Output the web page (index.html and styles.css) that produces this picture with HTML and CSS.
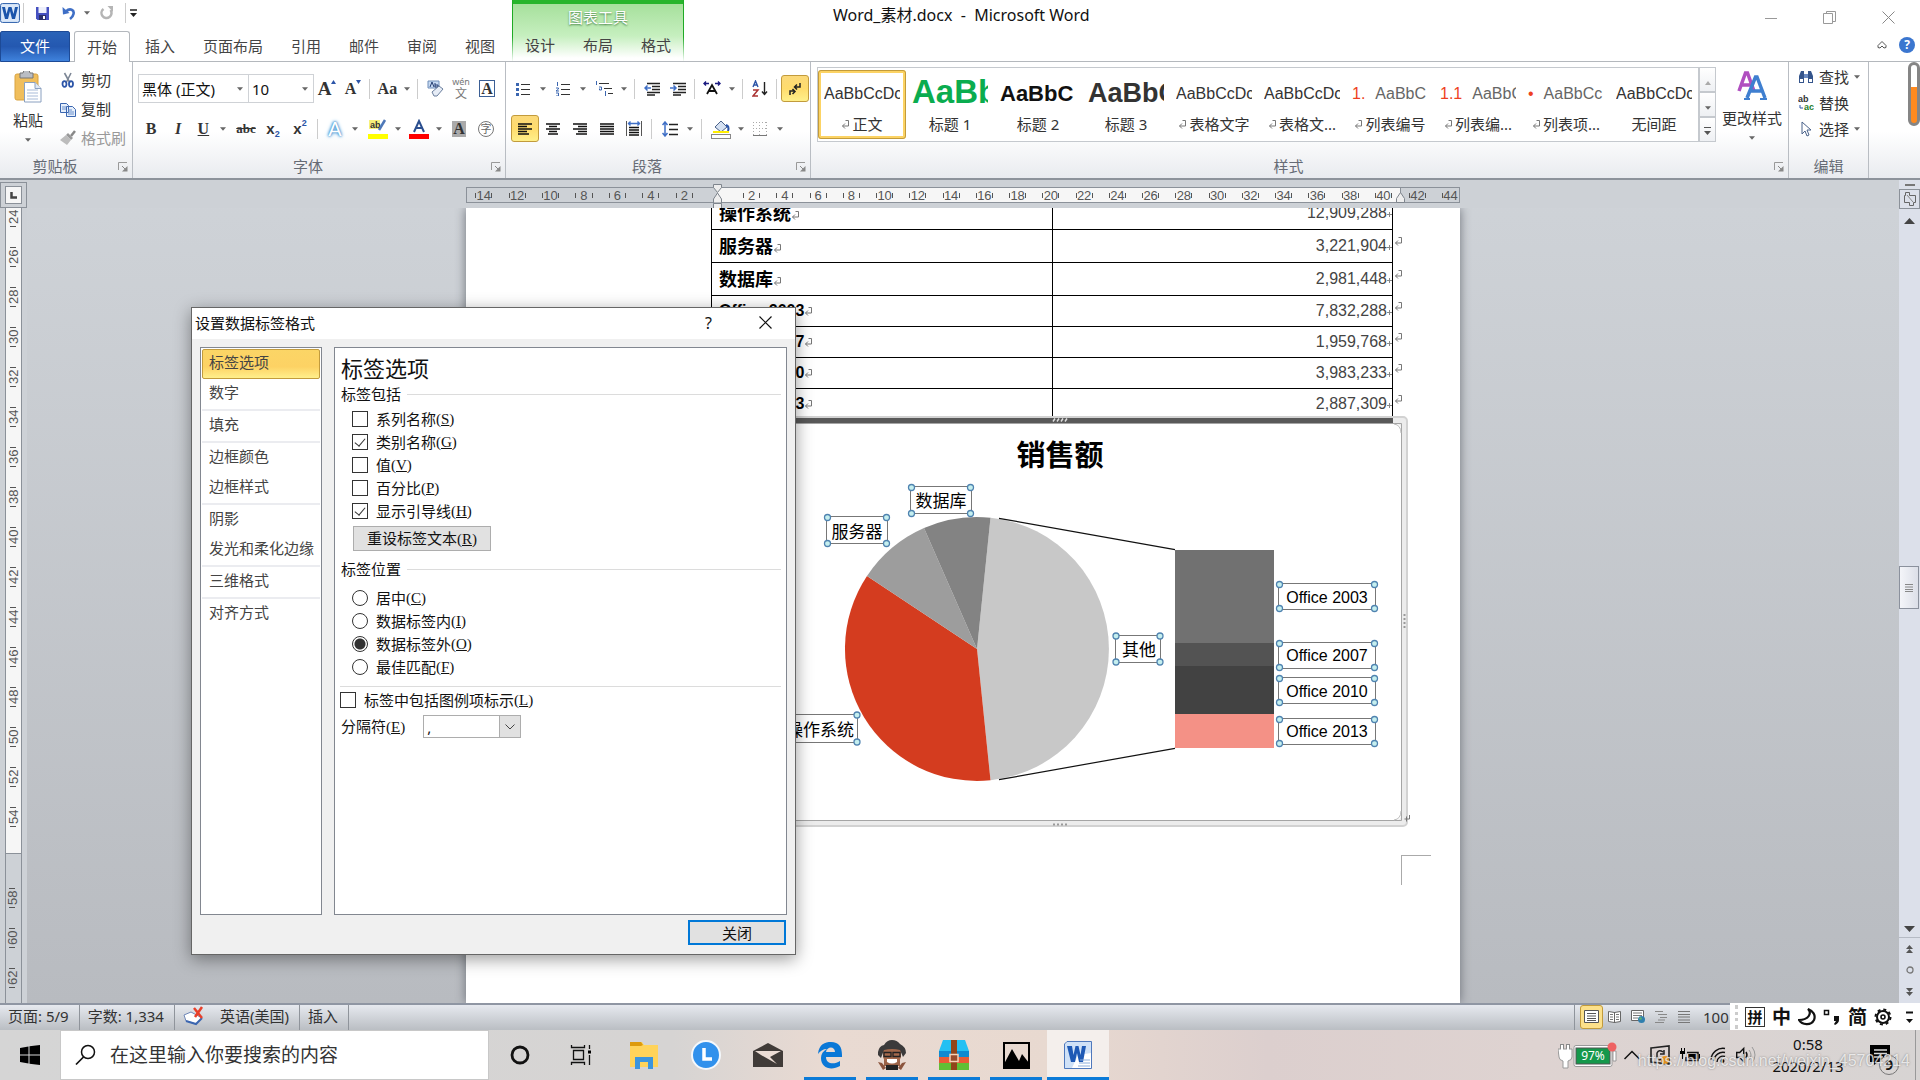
FILE: index.html
```html
<!DOCTYPE html>
<html lang="zh-CN">

<head>
  <meta charset="UTF-8">
  <title>Word_素材.docx - Microsoft Word</title>
  <link rel="stylesheet" href="styles.css">
</head>

<body>
  <svg width="0" height="0" class="defs">
    <symbol id="down" viewBox="0 0 7 4"><path d="M0 0h7L3.5 4z" fill="#666"/></symbol>
    <symbol id="launch" viewBox="0 0 10 10"><path d="M.5 8V.5H9" fill="none" stroke="#999"/><path d="M4 4l4 4" stroke="#888"/><path d="M9.500 4v5.500H4z" fill="#888"/></symbol>
    <symbol id="ret" viewBox="0 0 8 9"><path d="M4.500.5h3v5.500H1.500M4 3.500L1.500 6 4 8.500" fill="none" stroke="#777"/></symbol>
    <symbol id="cellmark" viewBox="0 0 5 7"><path d="M0 3.500h5M2.500 1v5" stroke="#888" fill="none"/></symbol>
  </svg>

  <header class="header">
    <div class="header-left">
      <div class="quick">
        <svg width="20" height="20" viewBox="0 0 20 20"><rect x=".5" y=".5" width="19" height="19" rx="2" fill="#cfe0f5" stroke="#3a6ab0"/><rect x="2" y="2" width="16" height="16" fill="#dbe8f8"/><path d="M2 4l3 12h3l2-8 2 8h3l3-12h-3l-1.500 7L11.500 4h-3L6.500 11 5 4z" fill="#1b55ab"/></svg>
        <span class="sep"></span>
        <svg class="quick-save" width="15" height="15" viewBox="0 0 15 15"><path d="M1 1h13v13H2.500L1 12.500z" fill="#4550c0"/><rect x="3.500" y="1" width="8" height="6" fill="#eef0fb"/><rect x="4" y="9" width="7" height="5" fill="#2a2f6a"/><rect x="8" y="10" width="2" height="3" fill="#fff"/></svg>
        <svg class="quick-undo" width="14" height="14" viewBox="0 0 14 14"><path d="M4 5.500C8 1.500 12.500 4 11.500 8c-.4 2-1.500 3.500-3.500 5" fill="none" stroke="#3f6fc6" stroke-width="2.600"/><path d="M.5 1l.5 7.500L7.500 7z" fill="#3f6fc6"/></svg>
        <svg width="6" height="4"><use href="#down"/></svg>
        <svg class="quick-redo" width="14" height="14" viewBox="0 0 14 14"><path d="M3.500 3a5 5 0 1 0 7 1" fill="none" stroke="#b5b5b5" stroke-width="2.500"/><path d="M7.500 0H13v6z" fill="#b5b5b5"/></svg>
        <span class="sep"></span>
        <svg width="7" height="8" viewBox="0 0 7 8"><path d="M0 1h7" stroke="#222" stroke-width="1.500"/><path d="M0 4h7L3.500 8z" fill="#222"/></svg>
      </div>
      <nav class="tabs">
        <button class="tab tab-file">文件</button>
        <button class="tab tab-active">开始</button>
        <button class="tab">插入</button>
        <button class="tab">页面布局</button>
        <button class="tab">引用</button>
        <button class="tab">邮件</button>
        <button class="tab">审阅</button>
        <button class="tab">视图</button>
      </nav>
    </div>
    <div class="context">
      <div class="context-title">图表工具</div>
      <nav class="tabs">
        <button class="tab">设计</button>
        <button class="tab">布局</button>
        <button class="tab">格式</button>
      </nav>
    </div>
    <div class="header-right">
      <div class="titlebar">
        <h1 class="title">Word_素材.docx&nbsp; -&nbsp; Microsoft Word</h1>
        <div class="window-buttons">
          <button aria-label="最小化"><svg width="12" height="12"><path d="M0 6.500h12" stroke="#999"/></svg></button>
          <button aria-label="还原"><svg width="13" height="13"><path d="M.5 2.500h9v10h-9zM3.500 2.500v-2h9v10h-3" fill="none" stroke="#999"/></svg></button>
          <button aria-label="关闭窗口"><svg width="13" height="13"><path d="M.5.5l12 12M12.500.5l-12 12" stroke="#888"/></svg></button>
        </div>
      </div>
      <div class="help">
        <svg width="10" height="8"><path d="M1 4.500l4-4 4 4v2L7 7 5 5 3 7 1 6.500z" fill="none" stroke="#555"/></svg>
        <button class="help-button">?</button>
      </div>
    </div>
  </header>

  <section class="ribbon">
    <div class="group group-clipboard">
      <div class="group-body">
        <button class="big">
          <svg width="28" height="32" viewBox="0 0 28 32"><rect x="1" y="3" width="23" height="26" rx="2" fill="#f0be5c" stroke="#d9a341"/><path d="M6 2h3a3.500 3.500 0 0 1 7 0h3v5H6z" fill="#b9bdc4" stroke="#777"/><path d="M10.500 11.500H21l6 6V31H10.500z" fill="#fff" stroke="#8aa0c0"/><path d="M21 11.500v6h6" fill="#dfe8f5" stroke="#8aa0c0"/><path d="M13 19h11M13 22h11M13 25h11M13 28h11" stroke="#a8bbd8"/></svg>
          <span>粘贴</span>
          <svg width="6" height="4"><use href="#down"/></svg>
        </button>
        <div class="stack stack-clip">
          <button class="item"><svg width="16" height="16" viewBox="0 0 16 16"><path d="M4.500 1L10 11M11 1L6 11" stroke="#7d8796" stroke-width="1.600"/><ellipse cx="4.500" cy="12" rx="2" ry="2.800" fill="none" stroke="#2c55a8" stroke-width="1.800"/><ellipse cx="11" cy="12" rx="2" ry="2.800" fill="none" stroke="#2c55a8" stroke-width="1.800"/></svg>剪切</button>
          <button class="item"><svg width="16" height="16" viewBox="0 0 16 16"><path d="M.5 2.500h6l2 2v7h-8zM6.500 5.500h6l3 3v7h-9z" fill="#e6effb" stroke="#3b66b0"/><path d="M2 6h4M2 8h4M8 9h4M8 11h6M8 13h6" stroke="#6b90cc"/></svg>复制</button>
          <button class="item item-off"><svg width="16" height="16" viewBox="0 0 16 16"><path d="M15 1l-4 5" stroke="#888" stroke-width="2.500"/><path d="M8 3l5 5-2 2-5-5z" fill="#999"/><path d="M6 5l5 5-4 5-7-5z" fill="#bcbcbc"/></svg>格式刷</button>
        </div>
      </div>
      <div class="group-name">剪贴板<svg class="launch" width="10" height="10"><use href="#launch"/></svg></div>
    </div>

    <div class="group group-font">
      <div class="group-body group-rows">
        <div class="tool-row">
          <div class="combo combo-font"><input aria-label="字体" value="黑体 (正文)"><svg width="6" height="4"><use href="#down"/></svg></div>
          <div class="combo combo-size"><input aria-label="字号" value="10"><svg width="6" height="4"><use href="#down"/></svg></div>
          <button class="tool serif">A<svg class="sup" width="5" height="4"><path d="M0 4l2.500-4L5 4z" fill="#2c55a8"/></svg></button>
          <button class="tool serif serif-small">A<svg class="sup" width="5" height="4"><path d="M0 0h5L2.500 4z" fill="#2c55a8"/></svg></button>
          <span class="sep"></span>
          <button class="tool tool-wide serif serif-small">Aa<svg width="6" height="4"><use href="#down"/></svg></button>
          <span class="sep"></span>
          <button class="tool"><svg width="17" height="17" viewBox="0 0 17 17"><path d="M1 1h11v7H1z" fill="#c7daf3" stroke="#6f8db8"/><path d="M3 7l2-5 2 5M8 7V3M8 5h3v2H8" fill="none" stroke="#223b70"/><path d="M5 12l7-6 4 3-6 7H7z" fill="#e6ecf6" stroke="#6b7f9d"/></svg></button>
          <button class="tool wen"><span>wén</span><span>文</span></button>
          <button class="tool serif"><span class="boxed">A</span></button>
        </div>
        <div class="tool-row tool-row-gap">
          <button class="tool serif serif-small">B</button>
          <button class="tool serif serif-small italic">I</button>
          <button class="tool tool-wide serif serif-small"><u>U</u><svg width="6" height="4"><use href="#down"/></svg></button>
          <button class="tool serif strike">abc</button>
          <button class="tool sans-icon">x<sub>2</sub></button>
          <button class="tool sans-icon">x<sup>2</sup></button>
          <span class="sep"></span>
          <button class="tool tool-wide glow">A<svg width="6" height="4"><use href="#down"/></svg></button>
          <button class="tool tool-wide"><svg width="20" height="20" viewBox="0 0 20 20"><rect x="1" y="1" width="11" height="9" fill="#f7f17a"/><text x="2" y="9" class="mini-text">ab</text><path d="M17 1l-6 10" stroke="#4f78b8" stroke-width="2.500"/><rect y="15" width="20" height="5" fill="#ff0"/></svg><svg width="6" height="4"><use href="#down"/></svg></button>
          <button class="tool tool-wide"><svg width="20" height="20" viewBox="0 0 20 20"><path d="M5 13L10 2l5 11M7 9h6" fill="none" stroke="#2b4f8f" stroke-width="2"/><rect y="15" width="20" height="5" fill="#f00"/></svg><svg width="6" height="4"><use href="#down"/></svg></button>
          <button class="tool serif"><span class="shaded">A</span></button>
          <button class="tool"><span class="ringed">字</span></button>
        </div>
      </div>
      <div class="group-name">字体<svg class="launch" width="10" height="10"><use href="#launch"/></svg></div>
    </div>

    <div class="group group-para">
      <div class="group-body group-rows">
        <div class="tool-row">
          <button class="tool tool-wide"><svg width="14" height="14" viewBox="0 0 14 14"><path d="M5 2.500h9M5 7.500h9M5 12.500h9" stroke="#333"/><path d="M0 2.500h3M0 7.500h3M0 12.500h3" stroke="#3b66b0" stroke-width="3"/></svg><svg width="6" height="4"><use href="#down"/></svg></button>
          <button class="tool tool-wide"><svg width="14" height="14" viewBox="0 0 14 14"><path d="M5 2.500h9M5 7.500h9M5 12.500h9" stroke="#333"/><path d="M1.500 0v4M0 6h2.500v1L0 9h3M0 11h2.500v3H0" stroke="#3b66b0" fill="none"/></svg><svg width="6" height="4"><use href="#down"/></svg></button>
          <button class="tool tool-wide"><svg width="18" height="15" viewBox="0 0 18 15"><path d="M4 2.500h10M9 7.500h8M13 12.500h5" stroke="#333"/><path d="M1.500 0v4M4 6h2.500v3H4.500V7.500M10.500 10v5" stroke="#3b66b0" fill="none"/></svg><svg width="6" height="4"><use href="#down"/></svg></button>
          <span class="sep"></span>
          <button class="tool"><svg width="16" height="14" viewBox="0 0 16 14"><path d="M3 1.500h13M8 4.500h8M8 7.500h8M3 10.500h13M3 13h8" stroke="#222" stroke-width="1.500"/><path d="M7 6H1M3.500 3.500L1 6l2.500 2.500" stroke="#3f6fc6" fill="none" stroke-width="1.500"/></svg></button>
          <button class="tool"><svg width="16" height="14" viewBox="0 0 16 14"><path d="M3 1.500h13M8 4.500h8M8 7.500h8M3 10.500h13M3 13h8" stroke="#222" stroke-width="1.500"/><path d="M0 6h6M3.500 3.500L6 6 3.500 8.500" stroke="#3f6fc6" fill="none" stroke-width="1.500"/></svg></button>
          <span class="sep"></span>
          <button class="tool tool-wide"><svg width="18" height="15" viewBox="0 0 18 15"><path d="M4 13L9 4l5 9M5.500 10h7" fill="none" stroke="#111" stroke-width="1.800"/><path d="M1 2.500h5M12 2.500h5M3 .5l-2 2 2 2M15 .5l2 2-2 2" stroke="#1a1a80" fill="none" stroke-width="1.400"/></svg><svg width="6" height="4"><use href="#down"/></svg></button>
          <span class="sep"></span>
          <button class="tool"><svg width="16" height="17" viewBox="0 0 16 17"><path d="M1 7l2.500-6L6 7M2 5h3" fill="none" stroke="#2c55a8" stroke-width="1.400"/><path d="M1 10h5l-5 6h5" fill="none" stroke="#a33" stroke-width="1.500"/><path d="M12.500 2v13M10 11.500l2.500 3 2.500-3" fill="none" stroke="#222" stroke-width="1.400"/></svg></button>
          <span class="sep"></span>
          <button class="tool tool-on"><svg width="12" height="14" viewBox="0 0 12 14"><path d="M11 1v4H6M8 2.500L5.500 5 8 7.500M1 13V9h4M3.500 7L6 9.500 3.500 12" fill="none" stroke="#222" stroke-width="1.500"/></svg></button>
        </div>
        <div class="tool-row tool-row-gap">
          <button class="tool tool-on"><svg width="14" height="12"><path d="M0 1h14M0 3.500h9M0 6h14M0 8.500h9M0 11h11" stroke="#111" stroke-width="1.400"/></svg></button>
          <button class="tool"><svg width="14" height="12"><path d="M0 1h14M3 3.500h8M0 6h14M3 8.500h8M2 11h10" stroke="#111" stroke-width="1.400"/></svg></button>
          <button class="tool"><svg width="14" height="12"><path d="M0 1h14M5 3.500h9M0 6h14M5 8.500h9M3 11h11" stroke="#111" stroke-width="1.400"/></svg></button>
          <button class="tool"><svg width="14" height="12"><path d="M0 1h14M0 3.500h14M0 6h14M0 8.500h14M0 11h14" stroke="#111" stroke-width="1.400"/></svg></button>
          <button class="tool"><svg width="16" height="15" viewBox="0 0 16 15"><path d="M.5 0v15M15.500 0v15" stroke="#555"/><path d="M2 2.500h12M4.500.5l-2 2 2 2M11.500.5l2 2-2 2" stroke="#3f6fc6" fill="none" stroke-width="1.400"/><path d="M3 6.500h10M3 9h10M3 11.500h10M3 14h10" stroke="#111" stroke-width="1.300"/></svg></button>
          <span class="sep"></span>
          <button class="tool tool-wide"><svg width="16" height="16" viewBox="0 0 16 16"><path d="M7 3.500h9M7 8.500h9M7 13.500h9" stroke="#222" stroke-width="1.300"/><path d="M3 1v14M.5 4L3 1l2.500 3M.5 12L3 15l2.500-3" fill="none" stroke="#3f6fc6" stroke-width="1.500"/></svg><svg width="6" height="4"><use href="#down"/></svg></button>
          <span class="sep"></span>
          <button class="tool tool-wide"><svg width="20" height="20" viewBox="0 0 20 20"><path d="M4 8l6-6 6 6-6 5z" fill="#d5e1f2" stroke="#4a628a"/><path d="M15 6c3 1 3 3 2 6" fill="none" stroke="#2c55a8" stroke-width="2"/><path d="M2 13h16" stroke="#ffee00" stroke-width="2"/><rect x=".5" y="15.500" width="19" height="4" fill="#fff" stroke="#888"/></svg><svg width="6" height="4"><use href="#down"/></svg></button>
          <button class="tool tool-wide"><svg width="14" height="14" viewBox="0 0 14 14"><path d="M.5 0v14M6.500 0v14M13.500 0v14M0 .5h14M0 6.500h14" stroke="#aaa" stroke-dasharray="1 2"/><path d="M0 13.500h14" stroke="#777"/></svg><svg width="6" height="4"><use href="#down"/></svg></button>
        </div>
      </div>
      <div class="group-name">段落<svg class="launch" width="10" height="10"><use href="#launch"/></svg></div>
    </div>

    <div class="group group-styles">
      <div class="group-body">
        <div class="gallery">
          <button class="style style-on"><span class="sample">AaBbCcDc</span><span class="style-name"><svg width="8" height="9"><use href="#ret"/></svg>正文</span></button>
          <button class="style"><span class="sample sample-h1">AaBb</span><span class="style-name">标题 1</span></button>
          <button class="style"><span class="sample sample-h2">AaBbC</span><span class="style-name">标题 2</span></button>
          <button class="style"><span class="sample sample-h3">AaBbC</span><span class="style-name">标题 3</span></button>
          <button class="style"><span class="sample">AaBbCcDc</span><span class="style-name"><svg width="8" height="9"><use href="#ret"/></svg>表格文字</span></button>
          <button class="style"><span class="sample">AaBbCcDc</span><span class="style-name"><svg width="8" height="9"><use href="#ret"/></svg>表格文...</span></button>
          <button class="style"><span class="sample sample-list"><b>1.</b>AaBbC</span><span class="style-name"><svg width="8" height="9"><use href="#ret"/></svg>列表编号</span></button>
          <button class="style"><span class="sample sample-list"><b>1.1</b>AaBbC</span><span class="style-name"><svg width="8" height="9"><use href="#ret"/></svg>列表编...</span></button>
          <button class="style"><span class="sample sample-list"><b>•</b>AaBbCc</span><span class="style-name"><svg width="8" height="9"><use href="#ret"/></svg>列表项...</span></button>
          <button class="style"><span class="sample">AaBbCcDc</span><span class="style-name">无间距</span></button>
        </div>
        <div class="gallery-scroll">
          <button aria-label="向上"><svg width="6" height="4"><path d="M0 4l3-4 3 4z" fill="#aaa"/></svg></button>
          <button aria-label="向下"><svg width="6" height="4"><use href="#down"/></svg></button>
          <button aria-label="其他样式"><svg width="7" height="8"><path d="M0 .5h7" stroke="#555"/><path d="M0 4h7L3.500 8z" fill="#555"/></svg></button>
        </div>
        <button class="big big-styles">
          <svg width="30" height="30" viewBox="0 0 30 30"><path d="M2 20L8.500 2h2L17 20M4.500 14h10" fill="none" stroke="#b04fc0" stroke-width="3.500"/><path d="M10 27L18.500 6h1.500L28 27M13 20h12" fill="none" stroke="#3f7fd0" stroke-width="3.500"/><path d="M7 28h6M23 28h7" stroke="#3f7fd0" stroke-width="2"/></svg>
          <span>更改样式</span>
          <svg width="6" height="4"><use href="#down"/></svg>
        </button>
      </div>
      <div class="group-name">样式<svg class="launch" width="10" height="10"><use href="#launch"/></svg></div>
    </div>

    <div class="group group-edit">
      <div class="group-body">
        <div class="stack stack-edit">
          <button class="item"><svg width="16" height="14" viewBox="0 0 16 14"><path d="M1 13V6l2-5h3v12zM10 13V1h3l2 5v7z" fill="#35558c"/><path d="M6 4h4v4H6z" fill="#6b8cc4"/><path d="M2 9h3v3H2zM11 9h3v3h-3z" fill="#fff"/></svg>查找<svg width="6" height="4"><use href="#down"/></svg></button>
          <button class="item"><svg width="16" height="16" viewBox="0 0 16 16"><text x="0" y="7" class="mini-text">ab</text><text x="6" y="15" class="mini-text mini-green">ac</text><path d="M2 10v3h3" fill="none" stroke="#2c55a8"/></svg>替换</button>
          <button class="item"><svg width="16" height="16" viewBox="0 0 16 16"><path d="M4 1v12l3-3 2 5 2-1-2-5h4z" fill="#fff" stroke="#4a628a"/></svg>选择<svg width="6" height="4"><use href="#down"/></svg></button>
        </div>
      </div>
      <div class="group-name">编辑</div>
    </div>
    <div class="ink"></div>
  </section>

  <main class="workspace">
    <div class="left-ruler">
      <div class="tab-stop"><span><svg width="7" height="7"><path d="M1.500 0v5.500H7" fill="none" stroke="#444" stroke-width="2.500"/></svg></span></div>
      <div class="vruler">
        <div class="vruler-page"><i>24</i><i>26</i><i>28</i><i>30</i><i>32</i><i>34</i><i>36</i><i>38</i><i>40</i><i>42</i><i>44</i><i>46</i><i>48</i><i>50</i><i>52</i><i>54</i></div>
        <div class="vruler-rest"><i>58</i><i>60</i><i>62</i></div>
      </div>
    </div>

    <div class="canvas">
      <div class="ruler-row">
        <div class="hruler">
          <div class="hruler-before"><i>14</i><i>12</i><i>10</i><i>8</i><i>6</i><i>4</i><i>2</i></div>
          <div class="hruler-page"><i>2</i><i>4</i><i>6</i><i>8</i><i>10</i><i>12</i><i>14</i><i>16</i><i>18</i><i>20</i><i>22</i><i>24</i><i>26</i><i>28</i><i>30</i><i>32</i><i>34</i><i>36</i><i>38</i><i>40</i></div>
          <div class="hruler-after"><i>42</i><i>44</i></div>
          <svg class="indent indent-left" width="9" height="26" viewBox="0 0 9 26"><path d="M.5.500h8v3l-4 5-4-5zM.5 19v-4l4-6 4 6v4zM.5 19.500h8v6h-8z" fill="#eee" stroke="#7e858d"/></svg>
          <svg class="indent indent-right" width="9" height="12" viewBox="0 0 9 12"><path d="M.5 11.500v-4l4-6 4 6v4z" fill="#eee" stroke="#7e858d"/></svg>
        </div>
      </div>

      <div class="page">
        <table class="sales">
          <tr class="tall"><th>操作系统<svg width="8" height="9"><use href="#ret"/></svg></th><td>12,909,288<svg width="5" height="7"><use href="#cellmark"/></svg></td><td class="end"></td></tr>
          <tr class="tall"><th>服务器<svg width="8" height="9"><use href="#ret"/></svg></th><td>3,221,904<svg width="5" height="7"><use href="#cellmark"/></svg></td><td class="end"><svg width="8" height="9"><use href="#ret"/></svg></td></tr>
          <tr class="tall"><th>数据库<svg width="8" height="9"><use href="#ret"/></svg></th><td>2,981,448<svg width="5" height="7"><use href="#cellmark"/></svg></td><td class="end"><svg width="8" height="9"><use href="#ret"/></svg></td></tr>
          <tr><th class="latin">Office 2003<svg width="8" height="9"><use href="#ret"/></svg></th><td>7,832,288<svg width="5" height="7"><use href="#cellmark"/></svg></td><td class="end"><svg width="8" height="9"><use href="#ret"/></svg></td></tr>
          <tr><th class="latin">Office 2007<svg width="8" height="9"><use href="#ret"/></svg></th><td>1,959,768<svg width="5" height="7"><use href="#cellmark"/></svg></td><td class="end"><svg width="8" height="9"><use href="#ret"/></svg></td></tr>
          <tr><th class="latin">Office 2010<svg width="8" height="9"><use href="#ret"/></svg></th><td>3,983,233<svg width="5" height="7"><use href="#cellmark"/></svg></td><td class="end"><svg width="8" height="9"><use href="#ret"/></svg></td></tr>
          <tr><th class="latin">Office 2013<svg width="8" height="9"><use href="#ret"/></svg></th><td>2,887,309<svg width="5" height="7"><use href="#cellmark"/></svg></td><td class="end"><svg width="8" height="9"><use href="#ret"/></svg></td></tr>
        </table>

        <svg class="chart" viewBox="704 416 708 411">
          <defs>
            <circle id="dot" r="3" fill="#c5efef" stroke="#4f83b0" stroke-width="1.300"/>
            <g id="box-office"><path d="M0 0h97v26H0z" fill="#fff" stroke="#777"/><use href="#dot" x="1" y="1"/><use href="#dot" x="96" y="1"/><use href="#dot" x="1" y="25"/><use href="#dot" x="96" y="25"/></g>
            <g id="box-name"><path d="M0 0h61v27H0z" fill="#fff" stroke="#777"/><use href="#dot" x="1" y="1"/><use href="#dot" x="60" y="1"/><use href="#dot" x="1" y="27"/><use href="#dot" x="60" y="27"/></g>
          </defs>
          <!-- frame -->
          <rect x="705" y="417" width="702" height="409" rx="4" fill="#ececec" stroke="#d2d2d2" stroke-width="2"/>
          <path d="M711 418h682v5.500H711z" fill="#595959"/>
          <rect x="711.500" y="423.500" width="690" height="397" rx="6" fill="#fff"/>
          <path d="M711.500 423.500h690v397h-690z" fill="none" stroke="#a5a5a5"/>
          <path d="M1394 424q7 1 7 9M1394 820q7-1 7-9" fill="none" stroke="#bbb"/>
          <path d="M1053 421.500l2-3M1057 421.500l2-3M1061 421.500l2-3M1065 421.500l2-3" stroke="#ddd" stroke-width="1.500"/>
          <path d="M1053 824.500h15M1404.500 614v16" stroke="#999" stroke-width="2" stroke-dasharray="2 2"/>
          <path d="M1409.500 815v4h-5M1406.500 816.500v5" fill="none" stroke="#777"/>
          <text x="1060" y="466" class="chart-title">销售额</text>
          <!-- pie -->
          <path d="M977 649L990.500 517.700A132 132 0 0 1 990.500 780.300z" fill="#c8c8c8"/>
          <path d="M977 649L990.500 780.300A132 132 0 0 1 867 576z" fill="#d43c1f"/>
          <path d="M977 649L867 576A132 132 0 0 1 924 528z" fill="#9d9d9d"/>
          <path d="M977 649L924 528A132 132 0 0 1 990.500 517.700z" fill="#838383"/>
          <path d="M999 518.300L1175 549.700M999 779.700L1175 748.300" stroke="#111" stroke-width="1.200"/>
          <rect x="1175" y="550" width="99" height="93" fill="#717171"/>
          <rect x="1175" y="643" width="99" height="23" fill="#535353"/>
          <rect x="1175" y="666" width="99" height="48" fill="#424242"/>
          <rect x="1175" y="714" width="99" height="34" fill="#f49186"/>
          <!-- labels -->
          <use href="#box-name" x="910.500" y="486.500"/><text x="941" y="507" class="chart-label">数据库</text>
          <use href="#box-name" x="826.500" y="516.500"/><text x="857" y="538" class="chart-label">服务器</text>
          <path d="M780.500 714.500h77v28h-77z" fill="#fff" stroke="#777"/><use href="#dot" x="857" y="715"/><use href="#dot" x="857" y="742"/><text x="820" y="736" class="chart-label">操作系统</text>
          <path d="M1115.500 635.500h45v27h-45z" fill="#fff" stroke="#777"/><use href="#dot" x="1116" y="636"/><use href="#dot" x="1160" y="636"/><use href="#dot" x="1116" y="662"/><use href="#dot" x="1160" y="662"/><text x="1139" y="656" class="chart-label">其他</text>
          <use href="#box-office" x="1278.500" y="583.500"/><text x="1327" y="603" class="chart-label chart-office">Office 2003</text>
          <use href="#box-office" x="1278.500" y="642.500"/><text x="1327" y="661" class="chart-label chart-office">Office 2007</text>
          <use href="#box-office" x="1278.500" y="677.500"/><text x="1327" y="697" class="chart-label chart-office">Office 2010</text>
          <use href="#box-office" x="1278.500" y="718.500"/><text x="1327" y="737" class="chart-label chart-office">Office 2013</text>
        </svg>
        <div class="crop-mark"></div>
      </div>
    </div>

    <div class="scrollbar">
      <div class="split"></div>
      <button class="ruler-toggle" aria-label="标尺"><svg width="14" height="14"><path d="M2.500.5h4v3h6v7h-2v3h-4v-3h-5v-7h1z" fill="none" stroke="#666"/><path d="M4 3l6 7" stroke="#888"/></svg></button>
      <button aria-label="向上滚动"><svg width="11" height="6"><path d="M0 6l5.500-6L11 6z" fill="#444"/></svg></button>
      <div class="track"><div class="thumb"><svg width="8" height="8"><path d="M0 .5h8M0 3h8M0 5.500h8M0 7.500h8" stroke="#888"/></svg></div></div>
      <button aria-label="向下滚动"><svg width="11" height="6"><path d="M0 0h11L5.500 6z" fill="#444"/></svg></button>
      <div class="browse">
        <svg width="7" height="8"><path d="M0 4l3.500-4L7 4zM0 8l3.500-4L7 8z" fill="#555"/></svg>
        <svg width="8" height="8"><circle cx="4" cy="4" r="3" fill="none" stroke="#777" stroke-width="1.300"/></svg>
        <svg width="7" height="8"><path d="M0 0h7L3.500 4zM0 4h7L3.500 8z" fill="#555"/></svg>
      </div>
    </div>
  </main>

  <footer class="status">
    <span class="status-cell">页面: 5/9</span>
    <span class="status-cell">字数: 1,334</span>
    <span class="status-cell status-lang"><svg width="22" height="20" viewBox="0 0 22 20"><path d="M1 9l7-3 11 6-6 6-10-3z" fill="#fff" stroke="#6e86b8"/><path d="M3 15l10 3 6-6" fill="none" stroke="#3b66b0" stroke-width="2"/><path d="M11 2l8 10M19 1l-7 10" stroke="#e8402a" stroke-width="2.500"/></svg>英语(美国)</span>
    <span class="status-cell">插入</span>
    <div class="views">
      <button class="view view-on" aria-label="页面视图"><svg width="15" height="13"><path d="M.5.5h14v12H.5z" fill="#fff" stroke="#555"/><path d="M3 3.500h9M3 6h9M3 8.500h9M3 10.500h9" stroke="#555"/></svg></button>
      <button class="view" aria-label="阅读版式"><svg width="14" height="13"><path d="M.5 1.500l6 1 6-1v10l-6 1-6-1zM6.500 2v11" fill="#fff" stroke="#666"/><path d="M2 4.500h3M2 7h3M8 4.500h3M8 7h3M2 9.500h3M8 9.500h3" stroke="#777"/></svg></button>
      <button class="view" aria-label="Web 版式"><svg width="14" height="13"><path d="M.5.500h12v10H.5z" fill="#fff" stroke="#666"/><path d="M2 3h9M2 5.500h9M2 8h5" stroke="#777"/><circle cx="10.500" cy="9.500" r="3.500" fill="#2f7fae"/><circle cx="9.500" cy="8.500" r="1.300" fill="#5fb26a"/></svg></button>
      <button class="view" aria-label="大纲"><svg width="12" height="12"><path d="M0 .5h8M3 3.500h9M5 6.500h7M3 9h7M0 11.500h9" stroke="#888"/></svg></button>
      <button class="view" aria-label="草稿"><svg width="12" height="12"><path d="M0 .5h12M0 3.500h12M0 6h12M0 9h12M0 11.500h12" stroke="#777"/></svg></button>
      <span class="zoom">100</span>
    </div>
    <div class="ime">
      <span class="ime-grip"></span>
      <span class="ime-mode">拼</span>
      <span>中</span>
      <svg width="18" height="18" viewBox="0 0 18 18"><path d="M10 1c4 4 1 11-9 11 3 5 12 6 15 0 2-5-1-9-6-11z" fill="none" stroke="#111" stroke-width="2.200"/></svg>
      <svg width="18" height="18" viewBox="0 0 18 18"><rect x="1.500" y="2.500" width="4" height="4" fill="none" stroke="#111" stroke-width="1.500"/><path d="M11 8h5v4q0 3-4 5l-1-1 2-3h-2z" fill="#111"/></svg>
      <span>简</span>
      <svg width="18" height="18" viewBox="0 0 18 18"><circle cx="9" cy="9" r="6" fill="none" stroke="#111" stroke-width="2"/><circle cx="9" cy="9" r="7.500" fill="none" stroke="#111" stroke-width="2" stroke-dasharray="3 2.900"/><circle cx="9" cy="9" r="2" fill="none" stroke="#111" stroke-width="1.600"/></svg>
      <svg class="ime-more" width="7" height="12"><path d="M0 1.500h7" stroke="#111" stroke-width="2"/><path d="M0 8h7l-3.500 4z" fill="#111"/></svg>
    </div>
  </footer>

  <div class="taskbar">
    <button class="start" aria-label="开始菜单"><svg width="20" height="20" viewBox="0 0 20 20"><path d="M0 3l8.500-1.500v8H0zM9.500 1.300L20 0v9.500H9.500zM0 10.500h8.500v8L0 17zM9.500 10.500H20V20L9.500 18.700z"/></svg></button>
    <label class="search">
      <svg width="22" height="22" viewBox="0 0 22 22"><circle cx="13" cy="8" r="6.500" fill="none" stroke="#111" stroke-width="1.500"/><path d="M8.500 13L1 20.500" stroke="#111" stroke-width="1.700"/></svg>
      <input aria-label="搜索" placeholder="在这里输入你要搜索的内容">
    </label>
    <button class="task" aria-label="Cortana"><svg width="20" height="20"><circle cx="10" cy="10" r="8" fill="none" stroke="#111" stroke-width="2.800"/></svg></button>
    <button class="task" aria-label="任务视图"><svg width="25" height="20"><path d="M3.500 5.500h10v9h-10zM1.500 0v2.500h13V0M1.500 20v-2.500h13V20M19.500 0v4M19.500 10v10" fill="none" stroke="#111" stroke-width="1.300"/><path d="M18 5.500h3v3h-3z"/></svg></button>
    <button class="task" aria-label="文件资源管理器"><svg width="28" height="28" viewBox="0 0 28 28"><path d="M0 1h12l2 3h14v22H0z" fill="#ffd35a"/><path d="M0 1h11l2 3-2 1H0z" fill="#dd9a0c"/><path d="M5 28V16h18v12h-5v-7h-8v7z" fill="#3c95dd"/></svg></button>
    <button class="task" aria-label="时钟"><svg width="30" height="30"><circle cx="15" cy="15" r="14" fill="#3191ec" stroke="#f4f8fc" stroke-width="2"/><path d="M13 8v11h8" fill="none" stroke="#fff" stroke-width="3.500"/></svg></button>
    <button class="task" aria-label="邮件应用"><svg width="30" height="24"><path d="M0 8l15-8 15 8v16H0z" fill="#403b38"/><path d="M2 8h26L17 14l7 7L8 12z" fill="#ebdcd4"/></svg></button>
    <button class="task task-open" aria-label="Edge"><svg width="26" height="28" viewBox="0 0 26 28"><path d="M1 13C2 3 8 1 14 1c8 0 11 5 11 13v2H9c0 7 8 8 14 4v5C14 30 4 27 4 17c0-4 2-7 6-9-4 0-7 2-9 5zM9 11h9c0-6-8-6-9 0z" fill="#0a78d7" fill-rule="evenodd"/></svg></button>
    <button class="task task-open" aria-label="头像"><svg width="30" height="30" viewBox="0 0 30 30"><path d="M7 19h16v7H7z" fill="#9a6247"/><path d="M6 8h18v9q-2 7-9 7t-9-7z" fill="#a4694c"/><path d="M1 12Q2 6 7 5q3-5 8-5t8 4q6 3 6 9l-3 4-3-7q-8-2-16 0l-3 8-3-3z" fill="#3b3a3b"/><path d="M7 12.500h7v4H7zM16 12.500h7v4h-7z" fill="none" stroke="#222" stroke-width="1.300"/><path d="M10 19h10v3q-5 3-10 0z" fill="#fff"/><path d="M9 25h12v5H9z" fill="#222"/><path d="M1 22l4 1 4 5-3 2zM29 22l-4 1-4 5 3 2z" fill="#8b543d"/></svg></button>
    <button class="task task-open" aria-label="压缩"><svg width="30" height="30" viewBox="0 0 30 30"><path d="M4 0h22l4 11H0z" fill="#23c0f3"/><path d="M0 11h30v6H0z" fill="#108ad0"/><path d="M0 17h30v6H0z" fill="#e85b36"/><path d="M0 23h30v7H0z" fill="#60bf35"/><path d="M12 0h6v30h-6z" fill="#914519"/><path d="M11 14.500h8v7h-8z" fill="#994b2b" stroke="#f6d2b6" stroke-width="1.500"/></svg></button>
    <button class="task task-open" aria-label="照片"><svg width="27" height="27"><rect x="1" y="1" width="25" height="25" fill="none" stroke="#000" stroke-width="2"/><path d="M1 22l8-15 7 12 3-7 7 9v5H1z"/></svg></button>
    <button class="task task-open task-current" aria-label="Word"><svg width="28" height="28" viewBox="0 0 28 28"><path d="M3 .5h24.500v27H.5V3z" fill="#cfe1f7" stroke="#4e78bc"/><path d="M14 14l13-2v15H8z" fill="#fff"/><path d="M3 5l4 16h4l2-9 2 9h4l3-16h-4l-1.500 9-2-9h-3l-2 9-1.500-9z" fill="#1e59b5"/><path d="M16 19h10M15 22h11M14 25h12" stroke="#8caedb"/></svg></button>
    <div class="tray">
      <svg width="60" height="30" viewBox="0 0 60 30"><path d="M4 4v6M10 4v6" stroke="#888" stroke-width="4"/><path d="M0 9h14v8q0 3-4 4v7H5v-7q-4-1-4-4z" fill="#fff" stroke="#999"/><path d="M4 5v6M10 5v6" stroke="#fff" stroke-width="2"/><rect x="16" y="5.500" width="38" height="21" rx="2" fill="#fff" stroke="#999"/><path d="M55 11h3v10h-3z" fill="#fff" stroke="#999"/><rect x="18" y="8" width="34" height="16" fill="#15984b" stroke="#555"/><text x="35" y="20" class="battery-text">97%</text><circle cx="54" cy="7" r="4.500" fill="#ee6262"/></svg>
      <svg width="16" height="10"><path d="M.5 9L8 1.500 15.500 9" fill="none" stroke="#111" stroke-width="1.500"/></svg>
      <svg width="20" height="20"><path d="M1 3l18-2v18l-18-2z" fill="none" stroke="#222" stroke-width="1.600"/><path d="M13 7q-4-3-6 1v4q1 4 5 2M14 5v4h-4" fill="none" stroke="#222" stroke-width="1.500"/><circle cx="15" cy="15" r="4" fill="#f49b1b"/></svg>
      <svg width="20" height="14"><path d="M7 4.500h11v8H6V9" fill="none" stroke="#111" stroke-width="1.500"/><path d="M8 6h9v5H8zM19 6h1v5h-1zM0 3h5v3H3v5H2V6H0zM1 0h1v3H1zM4 0h1v3H4z"/></svg>
      <svg width="16" height="16"><path d="M1 12.500A12 12 0 0 1 15 1.500M4 14A9 9 0 0 1 15 5.500M7 15A6 6 0 0 1 15 9.500" fill="none" stroke="#111" stroke-width="1.400"/><circle cx="12.500" cy="14" r="2"/></svg>
      <svg width="20" height="18"><path d="M.7 6.500h3l4-4v13l-4-4h-3zM10 6q2 3 0 6" fill="none" stroke="#111" stroke-width="1.400"/><path d="M13 4q4 5 0 10M16 1q6 8 0 16" fill="none" stroke="#999"/></svg>
      <div class="clock"><span>0:58</span><span>2020/2/13</span></div>
      <div class="notice"><svg width="20" height="20"><path d="M0 0h20v17H8l-4 3v-3H0z"/><path d="M4 5h13M4 8.500h13M4 12h9" stroke="#ddd" stroke-width="1.300"/></svg><span class="badge">9</span></div>
    </div>
    <div class="watermark">https://blog.csdn.net/weixin_45704214</div>
  </div>

  <form class="dialog">
    <div class="dialog-title">
      <span>设置数据标签格式</span>
      <button type="button" class="dialog-help">?</button>
      <button type="button" aria-label="关闭对话框"><svg width="13" height="13"><path d="M.5.5l12 12M12.500.5l-12 12" stroke="#111" stroke-width="1.200"/></svg></button>
    </div>
    <div class="dialog-body">
      <div class="dialog-nav">
        <button type="button" class="nav-on">标签选项</button>
        <button type="button" class="nav-line">数字</button>
        <button type="button" class="nav-line">填充</button>
        <button type="button">边框颜色</button>
        <button type="button" class="nav-line">边框样式</button>
        <button type="button">阴影</button>
        <button type="button" class="nav-line">发光和柔化边缘</button>
        <button type="button" class="nav-line">三维格式</button>
        <button type="button">对齐方式</button>
      </div>
      <div class="dialog-panel">
        <h2>标签选项</h2>
        <h3>标签包括</h3>
        <div class="options">
          <label><input type="checkbox">系列名称<span class="key">(<u>S</u>)</span></label>
          <label><input type="checkbox" checked>类别名称<span class="key">(<u>G</u>)</span></label>
          <label><input type="checkbox">值<span class="key">(<u>V</u>)</span></label>
          <label><input type="checkbox">百分比<span class="key">(<u>P</u>)</span></label>
          <label><input type="checkbox" checked>显示引导线<span class="key">(<u>H</u>)</span></label>
        </div>
        <button type="button" class="reset">重设标签文本<span class="key">(<u>R</u>)</span></button>
        <h3>标签位置</h3>
        <div class="options options-place">
          <label><input type="radio" name="place">居中<span class="key">(<u>C</u>)</span></label>
          <label><input type="radio" name="place">数据标签内<span class="key">(<u>I</u>)</span></label>
          <label><input type="radio" name="place" checked>数据标签外<span class="key">(<u>O</u>)</span></label>
          <label><input type="radio" name="place">最佳匹配<span class="key">(<u>F</u>)</span></label>
        </div>
        <div class="options options-legend">
          <label><input type="checkbox">标签中包括图例项标示<span class="key">(<u>L</u>)</span></label>
        </div>
        <div class="separator-row">
          <label for="separator">分隔符<span class="key">(<u>E</u>)</span></label>
          <div class="select-box">
            <select id="separator"><option>,</option></select>
            <span class="select-arrow"><svg width="10" height="6"><path d="M.5.500L5 5 9.500.5" fill="none" stroke="#444"/></svg></span>
          </div>
        </div>
      </div>
    </div>
    <div class="dialog-foot"><button type="button" class="close-button">关闭</button></div>
  </form>
</body>

</html>
```

FILE: styles.css
```css
* {
  box-sizing: border-box;
}

body {
  margin: 0;
  height: 100vh;
  overflow: hidden;
  position: relative;
  display: flex;
  flex-direction: column;
  background: #fff;
  color: #333;
  font: 15px/20px "Noto Sans", "Noto Sans CJK SC", sans-serif;
}

button {
  margin: 0;
  padding: 0;
  border: none;
  background: none;
  color: inherit;
  font: inherit;
  white-space: nowrap;
}

input, select {
  font: inherit;
  color: inherit;
}

svg {
  flex: none;
}

.defs {
  position: absolute;
}

.sep {
  width: 1px;
  height: 20px;
  margin: 0 4px 0 3px;
  background: #ccc;
}

/* title bar and tabs */
.header {
  display: flex;
  height: 62px;
  border-bottom: 1px solid #b4b8bd;
}

.header-left {
  width: 512px;
}

.quick {
  display: flex;
  align-items: center;
  height: 26px;
}

.quick-save {
  margin: 0 12px 0 7px;
}

.quick-undo {
  margin-right: 8px;
}

.quick-redo {
  margin: 0 8px 0 10px;
}

.tabs {
  display: flex;
  gap: 2px;
}

.header-left .tabs {
  padding-top: 5px;
}

.tab {
  flex: none;
  height: 31px;
  padding: 0 13px 2px;
  color: #444;
}

.tab-file {
  width: 70px;
  margin-right: 2px;
  border: 1px solid #1d4a96;
  border-radius: 2px 2px 0 0;
  background: linear-gradient(#2a63b8, #2458b0 50%, #3f82dc);
  color: #fff;
}

.tab-active {
  padding: 0 12px 2px;
  border: 1px solid #b4b8bd;
  border-bottom: none;
  border-radius: 3px 3px 0 0;
  background: #fff;
  position: relative;
  height: 32px;
}

.context {
  width: 172px;
  border: 1px solid #2ba82f;
  border-width: 0 1px;
  border-image: linear-gradient(#1faa25, #1faa25 60%, #fff) 1;
  background: linear-gradient(#27b52b 0 4px, #a6e09c 4px, #c6efbf 36px, #fff 58px);
}

.context-title {
  padding-top: 7px;
  height: 31px;
  text-align: center;
  color: #fff;
  text-shadow: 0 1px 2px #3d7a3d;
}

.context .tab {
  height: 30px;
}

.context .tabs {
  justify-content: center;
}

.header-right {
  flex: 1;
}

.titlebar {
  display: flex;
  justify-content: space-between;
  padding-left: 149px;
}

.title {
  margin: 0;
  padding-top: 5px;
  font-size: 16px;
  font-weight: normal;
  color: #111;
}

.window-buttons {
  display: flex;
  gap: 46px;
  padding: 8px 25px 0 0;
}

.help {
  display: flex;
  justify-content: flex-end;
  align-items: center;
  gap: 12px;
  padding: 9px 5px 0 0;
}

.help-button {
  width: 16px;
  height: 16px;
  border-radius: 50%;
  background: #3b76cf;
  color: #fff;
  font-size: 12px;
  font-weight: bold;
  line-height: 16px;
}

/* ribbon */
.ribbon {
  position: relative;
  display: flex;
  height: 118px;
  padding-right: 51px;
  border-bottom: 2px solid #8d939b;
  background: linear-gradient(#fff 60%, #e9ebef);
}

.group {
  flex: none;
  display: flex;
  flex-direction: column;
  border-right: 1px solid #b9bdc3;
}

.group-body {
  flex: 1;
  min-height: 0;
  display: flex;
}

.group-name {
  position: relative;
  height: 24px;
  padding-right: 22px;
  text-align: center;
  line-height: 24px;
  color: #666b75;
}

.launch {
  position: absolute;
  right: 4px;
  top: 8px;
}

.group-clipboard {
  width: 133px;
}

.group-font {
  width: 373px;
}

.group-para {
  width: 305px;
}

.group-styles {
  flex: 1;
  min-width: 0;
}

.group-edit {
  width: 80px;
}

.group-edit .group-name {
  padding-right: 0;
}

.big {
  flex: none;
  display: flex;
  flex-direction: column;
  align-items: center;
  width: 56px;
  padding-top: 9px;
}

.big span {
  margin: 7px 0 8px;
}

.big-styles {
  width: 72px;
}

.stack {
  display: flex;
  flex-direction: column;
}

.stack-clip {
  gap: 9px;
  padding: 8px 0 0 4px;
}

.stack-edit {
  gap: 6px;
  padding: 5px 0 0 9px;
}

.item {
  display: flex;
  align-items: center;
  gap: 5px;
}

.item-off {
  color: #999;
}

.group-rows {
  flex-direction: column;
  gap: 11px;
  padding: 12px 0 0 5px;
}

.tool-row {
  display: flex;
  align-items: center;
  height: 29px;
}

.tool-row-gap {
  gap: 1px;
}

.tool {
  display: flex;
  align-items: center;
  justify-content: center;
  width: 26px;
  height: 27px;
}

.tool-wide {
  width: 40px;
  justify-content: space-around;
}

.tool-on {
  width: 28px;
  border: 1px solid #c29b3c;
  border-radius: 3px;
  background: linear-gradient(#fbd97a, #ffdc6d 50%, #fff08a);
}

.serif {
  font: bold 19px/20px "Liberation Serif", serif;
}

.serif-small {
  font-size: 16px;
}

.sup {
  margin-bottom: 14px;
}

.italic {
  font-style: italic;
}

.strike {
  font-size: 13px;
  text-decoration: line-through;
}

.sans-icon {
  font: bold 15px/20px "Liberation Sans", sans-serif;
}

.sans-icon sub, .sans-icon sup {
  font-size: 9px;
  line-height: 9px;
  color: #2c55a8;
}

.sans-icon sub {
  margin-top: 12px;
}

.sans-icon sup {
  margin-bottom: 10px;
}

.glow {
  font: 20px/20px "Liberation Sans", sans-serif;
  color: #fff;
  text-shadow: 0 0 2px #3d8fd0, 0 0 3px #3d8fd0, 0 0 4px #6db4e6;
}

.mini-text {
  font: bold 9px "Liberation Sans", sans-serif;
  fill: #333;
}

.mini-green {
  fill: #1d7d2a;
}

.wen {
  flex-direction: column;
  font-size: 12px;
  line-height: 14px;
  color: #777;
}

.wen span:first-child {
  font-size: 9px;
  line-height: 10px;
}

.boxed {
  width: 16px;
  border: 1px solid #3b5f95;
  line-height: 15px;
  font-size: 16px;
}

.shaded {
  width: 14px;
  background: #aaa;
  line-height: 16px;
  font-size: 16px;
}

.ringed {
  width: 16px;
  height: 16px;
  border: 1px solid #777;
  border-radius: 50%;
  font-size: 11px;
  line-height: 14px;
  color: #666;
}

.combo {
  display: flex;
  align-items: center;
  height: 29px;
  padding-right: 5px;
  border: 1px solid #cfd2d6;
  background: #fff;
}

.combo input {
  flex: 1;
  min-width: 0;
  padding: 0 3px;
  border: none;
  outline: none;
  background: none;
  color: #111;
}

.combo-font {
  width: 111px;
}

.combo-size {
  width: 66px;
  margin-left: -1px;
}

.gallery {
  display: flex;
  flex: 1;
  min-width: 0;
  height: 75px;
  margin: 5px 0 0 6px;
  border: 1px solid #c5c9ce;
  background: #fff;
}

.style {
  flex: 1;
  min-width: 0;
  display: flex;
  flex-direction: column;
  margin: 2px 0;
  padding: 0 3px;
  border: 3px solid transparent;
}

.style-on {
  border-color: #fcd364;
  border-radius: 3px;
  outline: 1px solid #c29b3c;
  outline-offset: -1px;
}

.sample {
  width: 100%;
  height: 42px;
  overflow: hidden;
  white-space: nowrap;
  text-align: left;
  font: 16px/42px "Liberation Sans", sans-serif;
}

.sample-h1 {
  font-size: 33px;
  line-height: 38px;
  font-weight: bold;
  color: #0aac4f;
}

.sample-h2 {
  font-size: 22px;
  font-weight: bold;
  color: #111;
}

.sample-h3 {
  font-size: 27px;
  line-height: 40px;
  font-weight: bold;
}

.sample-list {
  color: #666;
}

.sample-list b {
  margin-right: 10px;
  font-weight: normal;
  color: #ee3f22;
}

.style-name {
  width: 100%;
  display: flex;
  align-items: center;
  justify-content: center;
  gap: 3px;
  white-space: nowrap;
  font-size: 15px;
  line-height: 19px;
}

.gallery-scroll {
  flex: none;
  display: flex;
  flex-direction: column;
  width: 17px;
  height: 75px;
  margin-top: 5px;
}

.gallery-scroll button {
  flex: 1;
  border: 1px solid #c5c9ce;
  line-height: 8px;
  background: linear-gradient(#fff, #eef0f3);
}

.ink {
  position: absolute;
  right: 0;
  top: 0;
  width: 12px;
  height: 64px;
  border: 3px solid #858585;
  border-radius: 6px;
  background: linear-gradient(#fff 22px, #ff8a1f 22px);
}

/* document area */
.workspace {
  flex: 1;
  min-height: 0;
  display: flex;
  background: linear-gradient(#cfd3d8, #b8bbc0);
}

.left-ruler {
  display: flex;
  flex-direction: column;
  width: 27px;
  padding-top: 2px;
  background: #cdd1d6;
}

.tab-stop {
  height: 26px;
  padding: 3px 4px;
  border: 1px solid #8b9199;
}

.tab-stop span {
  display: flex;
  align-items: center;
  justify-content: center;
  height: 18px;
  border: 1px solid #8b9199;
  background: #f6f6f6;
}

.vruler {
  flex: 1;
  min-height: 0;
  display: flex;
  flex-direction: column;
  width: 17px;
  margin-left: 5px;
  border: 1px solid #8b9199;
  border-width: 0 1px;
  overflow: hidden;
}

.vruler-page {
  display: flex;
  flex-direction: column;
  justify-content: flex-end;
  height: 646px;
  padding-bottom: 16px;
  border-bottom: 1px solid #8b9199;
  background: #f6f6f6;
  overflow: hidden;
}

.vruler-rest {
  padding-top: 24px;
}

.vruler i {
  flex: none;
  display: flex;
  align-items: center;
  justify-content: center;
  height: 40px;
  writing-mode: vertical-rl;
  transform: rotate(180deg);
  background: linear-gradient(#555, #555) 50% 25% / 6px 1px no-repeat, linear-gradient(#555, #555) 50% 75% / 6px 1px no-repeat;
}

.vruler i, .hruler i {
  font: 13px/13px "Liberation Sans", sans-serif;
  color: #555;
}

.canvas {
  flex: 1;
  min-width: 0;
  display: flex;
  flex-direction: column;
  align-items: center;
}

.ruler-row {
  width: 100%;
  height: 28px;
  padding-top: 7px;
  background: #cdd1d6;
}

.hruler {
  position: relative;
  display: flex;
  width: 994px;
  height: 16px;
  margin: 0 auto;
  border: 1px solid #8b9199;
}

.hruler div {
  display: flex;
  align-items: center;
}

.hruler i {
  flex: 1;
  text-align: center;
  background: linear-gradient(#555, #555) 25% 50% / 1px 5px no-repeat, linear-gradient(#555, #555) 75% 50% / 1px 5px no-repeat;
}

.hruler-before {
  width: 251px;
  padding-right: 17px;
}

.hruler-page {
  flex: 1;
  padding-left: 17px;
  background: #f6f6f6;
}

.hruler-after {
  width: 59px;
  border-left: 1px solid #8b9199;
  overflow: hidden;
}

.hruler-after i {
  flex: 0 0 33px;
}

.hruler-after i:last-child {
  background: linear-gradient(#555, #555) 25% 50% / 1px 5px no-repeat;
}

.indent {
  position: absolute;
}

.indent-left {
  left: 246px;
  top: -4px;
}

.indent-right {
  right: 54px;
  bottom: -1px;
}

.page {
  flex: 1;
  min-height: 0;
  display: flex;
  flex-direction: column;
  align-items: flex-start;
  width: 994px;
  padding-left: 245px;
  background: #fff;
  overflow: hidden;
  box-shadow: 0 0 10px #6c7078;
  clip-path: inset(0 -12px);
}

.sales {
  flex: none;
  width: 702px;
  margin-top: -12px;
  table-layout: fixed;
  border-collapse: collapse;
}

.sales tr {
  height: 31px;
}

.sales .tall {
  height: 33px;
}

.sales th, .sales td {
  padding: 0 5px 0 7px;
  border: 1px solid #000;
  line-height: 24px;
  white-space: nowrap;
}

.sales th {
  width: 341px;
  text-align: left;
  font-size: 18px;
  color: #000;
}

.sales .latin {
  font: bold 16px/24px "Liberation Sans", sans-serif;
  color: #000;
}

.sales td {
  padding-right: 0;
  text-align: right;
  font: 16px/24px "Liberation Sans", sans-serif;
  color: #444;
}

.sales .end {
  width: 20px;
  padding: 0 0 10px 1px;
  border: none;
  text-align: left;
  line-height: 16px;
}

.chart {
  flex: none;
  width: 708px;
  height: 411px;
  margin: -4px 0 0 -7px;
}

.chart-title {
  font: bold 29px "Noto Sans CJK SC", sans-serif;
  text-anchor: middle;
}

.chart-label {
  font: 17px "Noto Sans CJK SC", sans-serif;
  text-anchor: middle;
}

.chart-office {
  font: 16px "Liberation Sans", sans-serif;
}

.crop-mark {
  width: 30px;
  height: 30px;
  margin: 28px 0 0 690px;
  border: 1px solid #aaa;
  border-width: 1px 0 0 1px;
}

.scrollbar {
  display: flex;
  flex-direction: column;
  align-items: center;
  width: 21px;
  background: #dce0ea;
}

.split {
  width: 10px;
  height: 2px;
  margin: 4px 0 3px;
  background: #777;
}

.scrollbar button {
  width: 21px;
  height: 20px;
  line-height: 8px;
}

.scrollbar .ruler-toggle {
  border: 1px solid #8b9199;
}

.track {
  flex: 1;
  width: 21px;
  padding-top: 337px;
}

.thumb {
  display: flex;
  align-items: center;
  justify-content: center;
  width: 20px;
  height: 43px;
  border: 1px solid #8b919d;
  background: linear-gradient(90deg, #f4f5f9, #dcdfe8);
}

.browse {
  display: flex;
  flex-direction: column;
  align-items: center;
  justify-content: space-around;
  width: 21px;
  height: 66px;
  border-top: 1px solid #b5bac4;
}

/* status bar */
.status {
  display: flex;
  align-items: center;
  height: 27px;
  border-top: 2px solid #8f96a3;
  background: linear-gradient(#e6e9ef, #babec3);
}

.status-cell {
  display: flex;
  align-items: center;
  height: 25px;
  padding: 0 10px 3px 8px;
  border-right: 1px solid #8f949b;
}

.status-lang {
  gap: 15px;
}

.views {
  display: flex;
  align-items: center;
  margin-left: auto;
  padding: 0 0 2px 5px;
  border-left: 1px solid #8f949b;
  height: 25px;
}

.view {
  width: 23px;
  height: 24px;
  line-height: 8px;
}

.view-on {
  border: 1px solid #c29b3c;
  border-radius: 3px;
  background: #fce08a;
}

.zoom {
  width: 35px;
  padding-left: 8px;
  overflow: hidden;
}

.ime {
  display: flex;
  align-items: center;
  gap: 7px;
  align-self: stretch;
  width: 190px;
  margin-top: -2px;
  padding-left: 5px;
  background: #fff;
  color: #111;
  font-size: 19px;
  font-weight: bold;
}

.ime-grip {
  height: 24px;
  border-left: 3px dotted #ccc;
}

.ime .ime-mode {
  width: 20px;
  height: 20px;
  border: 1px solid #333;
  font-size: 15px;
  line-height: 18px;
  text-align: center;
}

.ime-more {
  margin-left: 7px;
}

/* taskbar */
.taskbar {
  position: relative;
  display: flex;
  height: 50px;
  background: linear-gradient(90deg, #d5d5d5, #d6d4d3 35%, #e9dad2 43%, #e8d9d0 55%, #dccfce 66%, #ded3d1 80%, #d7d4d3);
}

.start {
  width: 60px;
  line-height: 8px;
}

.search {
  display: flex;
  align-items: center;
  gap: 13px;
  width: 429px;
  padding-left: 14px;
  border: 1px solid #c8c8c8;
  background: #fff;
}

.search input {
  flex: 1;
  min-width: 0;
  padding: 0;
  border: none;
  outline: none;
  background: none;
  font-size: 19px;
}

.search input::placeholder {
  color: #333;
}

.task {
  position: relative;
  display: flex;
  align-items: center;
  justify-content: center;
  width: 62px;
}

.task-open::after {
  content: "";
  position: absolute;
  left: 5px;
  right: 5px;
  bottom: 0;
  height: 3px;
  background: #0b7bd8;
}

.task-current {
  background: #f4efec;
}

.task-current::after {
  left: 0;
  right: 0;
}

.tray {
  display: flex;
  align-items: center;
  gap: 10px;
  margin-left: auto;
  padding-right: 4px;
}

.tray svg:first-child {
  margin-right: -4px;
}

.battery-text {
  font: 12px "Noto Sans", sans-serif;
  text-anchor: middle;
  fill: #fff;
}

.clock {
  display: flex;
  flex-direction: column;
  align-items: center;
  gap: 2px;
  width: 84px;
  margin-right: 2px;
  color: #111;
}

.notice {
  position: relative;
  width: 54px;
  height: 50px;
  padding: 15px 0 0 8px;
  border-right: 1px solid #999;
}

.badge {
  position: absolute;
  left: 17px;
  top: 25px;
  width: 20px;
  height: 20px;
  border: 1px solid #777;
  border-radius: 50%;
  background: #d9d5d4;
  text-align: center;
  font-size: 14px;
  line-height: 18px;
  font-weight: bold;
  color: #111;
}

.watermark {
  position: absolute;
  right: 10px;
  top: 21px;
  color: rgba(255, 255, 255, 0.75);
  text-shadow: 0 0 2px rgba(70, 70, 70, 0.6);
  font: 16px/20px "Liberation Sans", sans-serif;
}

/* format dialog */
.dialog {
  position: absolute;
  left: 191px;
  top: 307px;
  width: 605px;
  border: 1px solid #666;
  background: #f0f0f0;
  color: #111;
  box-shadow: 0 4px 16px rgba(0, 0, 0, 0.4);
}

.dialog-title {
  display: flex;
  align-items: center;
  height: 31px;
  padding: 0 23px 1px 3px;
  background: #fff;
}

.dialog-title span {
  flex: 1;
}

.dialog-title .dialog-help {
  margin-right: 47px;
  font-size: 16px;
}

.dialog-body {
  display: flex;
  gap: 12px;
  min-height: 568px;
  margin: 8px 8px 0;
}

.dialog-nav {
  width: 122px;
  padding: 1px;
  border: 1px solid #828790;
  background: #fff;
}

.dialog-nav button {
  display: block;
  width: 100%;
  height: 30px;
  padding: 0 0 4px 7px;
  text-align: left;
  color: #444;
  white-space: nowrap;
}

.dialog-nav .nav-line {
  height: 32px;
  border-bottom: 2px solid #ebecf0;
}

.dialog-nav .nav-on {
  padding-left: 6px;
  border: 1px solid #c29b3c;
  border-radius: 2px;
  background: linear-gradient(#fbd566, #fdd264 60%, #ffef8c);
}

.dialog-panel {
  flex: 1;
  padding: 5px 5px 0;
  border: 1px solid #828790;
  background: #fff;
}

.dialog-panel h2 {
  margin: 0;
  padding-left: 1px;
  font-size: 22px;
  line-height: 31px;
  font-weight: normal;
}

.dialog-panel h3 {
  display: flex;
  align-items: center;
  gap: 6px;
  margin: 0;
  padding-left: 1px;
  font-size: 15px;
  line-height: 20px;
  font-weight: normal;
}

.dialog-panel h3::after {
  content: "";
  flex: 1;
  height: 1px;
  background: #dcdcdc;
}

.options {
  padding: 3px 0 0 12px;
}

.options label {
  display: flex;
  align-items: center;
  height: 23px;
}

.options input {
  appearance: none;
  width: 16px;
  height: 16px;
  margin: 0 8px 0 0;
  border: 1px solid #333;
  background: #fff;
}

.options input[type="radio"] {
  border-radius: 50%;
}

.options input[type="radio"]:checked {
  background: radial-gradient(circle, #333 5px, #fff 6px);
}

.options input[type="checkbox"]:checked::before {
  content: "";
  display: block;
  width: 5px;
  height: 9px;
  margin: 1px 0 0 4px;
  border: solid #333;
  border-width: 0 1px 1px 0;
  transform: rotate(40deg);
}

.key {
  font: 15px/20px "Liberation Serif", serif;
}

.reset {
  width: 138px;
  height: 25px;
  margin: 4px 0 8px 13px;
  border: 1px solid #adadad;
  background: #e1e1e1;
}

.options-place {
  padding: 7px 0 8px 12px;
}

.options-legend {
  padding: 1px 0 4px;
  border-top: 1px solid #dcdcdc;
}

.separator-row {
  display: flex;
  align-items: center;
  gap: 18px;
  padding-left: 1px;
}

.select-box {
  position: relative;
  width: 98px;
}

.select-box select {
  appearance: none;
  display: block;
  width: 100%;
  height: 23px;
  padding: 0 3px;
  border: 1px solid #adadad;
  border-radius: 0;
  background: #fff;
}

.select-arrow {
  position: absolute;
  right: 0;
  top: 0;
  display: flex;
  align-items: center;
  justify-content: center;
  width: 22px;
  height: 23px;
  border: 1px solid #adadad;
  background: #e1e1e1;
  pointer-events: none;
}

.dialog-foot {
  display: flex;
  justify-content: flex-end;
  padding: 5px 9px 9px;
}

.close-button {
  width: 98px;
  height: 25px;
  border: 2px solid #0078d7;
  background: #e1e1e1;
  line-height: 20px;
}
```
